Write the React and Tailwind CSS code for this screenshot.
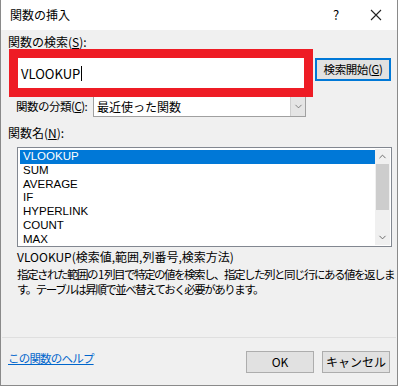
import { ChevronDown, ChevronUp } from "lucide-react";

const font = { fontFamily: '"Noto Sans CJK JP", "Noto Sans", sans-serif' };
const listFont = { fontFamily: '"Liberation Sans", Arial, sans-serif' };

const items = ["VLOOKUP", "SUM", "AVERAGE", "IF", "HYPERLINK", "COUNT", "MAX"];

export default function App() {
  return (
    <div className="w-[400px] h-[387px] bg-white overflow-hidden text-[#000]" style={font}>
      <div className="w-[398px] h-[386px] border-l border-r border-b border-[#8a8a8a] flex flex-col">
        {/* title bar */}
        <div className="h-[30px] bg-white flex items-center pl-[9px] pr-[14px] text-[12px]">
          <span className="flex-1">関数の挿入</span>
          <span className="w-[20px] text-center mr-[24px] text-[13px]">?</span>
          <svg width="12" height="12" viewBox="0 0 12 12" className="mr-[1px]">
            <path d="M1 1 L11 11 M11 1 L1 11" stroke="#222" strokeWidth="1.1" />
          </svg>
        </div>

        <div className="flex-1 bg-[#f0f0f0] flex flex-col text-[12px]">
          <div className="h-[19px] pl-[7px] pt-[4px] leading-[15px] whitespace-nowrap">
            関数の検索(<span className="underline">S</span>):
          </div>

          <div className="flex items-start pl-[8px]">
            <div className="w-[304px] h-[48px] border-[9px] border-[#ee1c25] bg-white flex items-center pl-[3px]">
              <span className="text-[13px] leading-none">VLOOKUP</span>
              <span className="w-px h-[15px] bg-black ml-[1px]" />
            </div>
            <button className="ml-[2px] mt-[9px] w-[76px] h-[23px] bg-[#e1e1e1] border-2 border-[#0078d7] text-[11.5px] tracking-[-0.4px] leading-none flex items-center justify-center whitespace-nowrap">
              検索開始(<span className="underline">G</span>)
            </button>
          </div>

          <div className="flex items-center h-[20px]">
            <span className="pl-[15px] w-[92px] text-[11.5px] whitespace-nowrap tracking-[-0.5px]">
              関数の分類(<span className="underline">C</span>):
            </span>
            <div className="w-[213px] h-[20px] bg-white border border-[#a0a0a0] border-t-0 flex items-center">
              <span className="flex-1 pl-[3px]">最近使った関数</span>
              <div className="w-[15px] h-full bg-[#e5e5e5] border-l border-[#cfcfcf] flex items-center justify-center">
                <ChevronDown size={11} strokeWidth={1.5} color="#555" />
              </div>
            </div>
          </div>

          <div className="mt-[8px] h-[16px] pl-[7px] leading-[16px] whitespace-nowrap">
            関数名(<span className="underline">N</span>):
          </div>

          <div className="mt-[6px] ml-[16px] w-[375px] h-[100px] bg-white border border-[#828790] flex p-px">
            <div className="flex-1 flex flex-col pl-px pt-px" style={listFont}>
              {items.map((it, i) => (
                <div
                  key={it}
                  className={
                    i === 0
                      ? "h-[13.8px] bg-[#0078d7] text-white pl-[3px] leading-[13.8px] text-[11.5px]"
                      : "h-[13.8px] pl-[3px] leading-[13.8px] text-[11.5px]"
                  }
                >
                  {it}
                </div>
              ))}
            </div>
            <div className="w-[15px] bg-[#f0f0f0] flex flex-col items-center">
              <div className="h-[15px] flex items-center justify-center">
                <ChevronUp size={11} strokeWidth={2} color="#606060" />
              </div>
              <div className="w-[13px] h-[46px] bg-[#cdcdcd]" />
              <div className="flex-1" />
              <div className="h-[15px] flex items-center justify-center">
                <ChevronDown size={11} strokeWidth={2} color="#606060" />
              </div>
            </div>
          </div>

          <div className="mt-[2px] pl-[16px] h-[16px] leading-[16px] whitespace-nowrap">
            VLOOKUP(検索値,範囲,列番号,検索方法)
          </div>
          <div className="mt-[2px] pl-[16px] leading-[15px] whitespace-nowrap tracking-[-1.5px] text-[11.5px]">
            指定された範囲の 1 列目で特定の値を検索し、指定した列と同じ行にある値を返しま
            <br />
            す。テーブルは昇順で並べ替えておく必要があります。
          </div>

          <div className="flex-1" />
          <div className="h-px bg-[#dfdfdf] mx-[1px]" />

          <div className="h-[47px] flex items-center pl-[7px] pr-[7px]">
            <a className="text-[#0066cc] underline flex-1 text-[11.5px] tracking-[-0.8px] -mt-[6px] whitespace-nowrap">この関数のヘルプ</a>
            <button className="w-[68px] h-[22px] bg-[#e1e1e1] border border-[#adadad] text-[12px]">OK</button>
            <button className="ml-[8px] w-[68px] h-[22px] bg-[#e1e1e1] border border-[#adadad] text-[12px]">キャンセル</button>
          </div>
        </div>
      </div>
    </div>
  );
}
